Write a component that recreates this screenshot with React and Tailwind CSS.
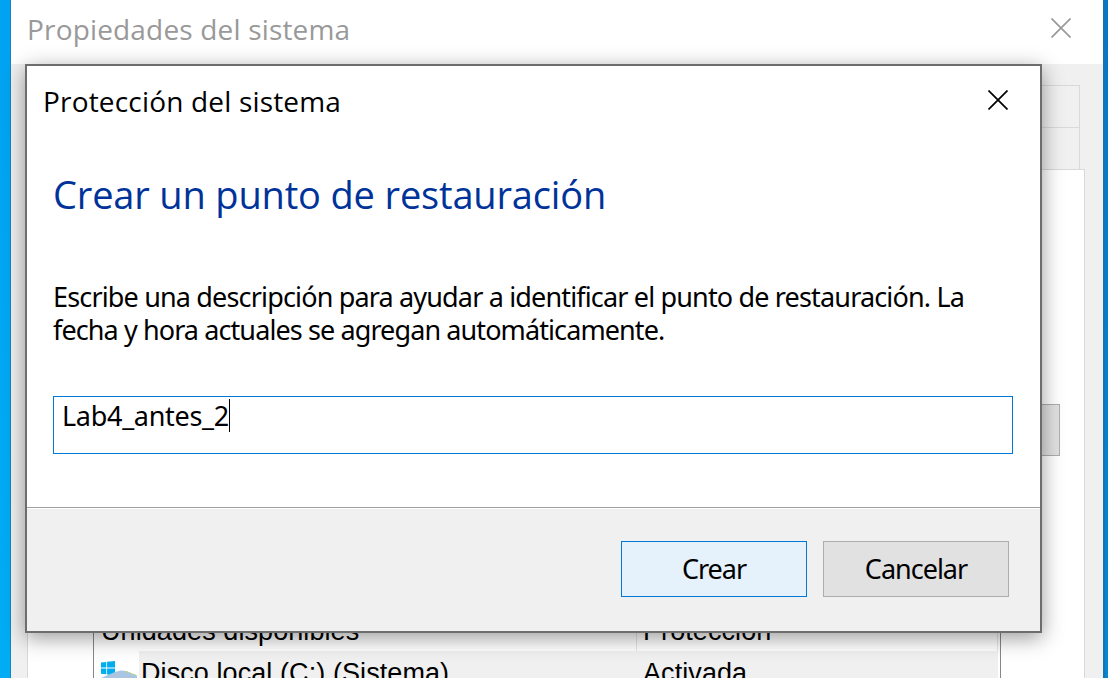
function CloseIcon({ className }) {
  return (
    <svg className={className} width="20" height="20" viewBox="0 0 20 20" fill="none" stroke="currentColor" strokeWidth="1.7">
      <path d="M0.5 0.5 19.5 19.5M19.5 0.5 0.5 19.5" />
    </svg>
  );
}

function DriveIcon() {
  return (
    <svg width="36" height="24" viewBox="0 0 36 24" className="shrink-0">
      <path d="M0 1.6 5.3.9V6.6H0ZM6.1.8 14 0V6.6H6.1ZM0 7.4H5.3V13.3L0 12.7ZM6.1 7.4H14V14.4L6.1 13.5Z" fill="#00adef" />
      <path d="M0 17 14 11 20 9.5 25 10 36 14.5V24H0Z" fill="#a9c5e2" />
      <path d="M25 10.5 36 14.5" stroke="#c5dc3c" strokeWidth="1" strokeDasharray="2 2" />
    </svg>
  );
}

function PropertiesWindow() {
  return (
    <div className="flex h-[678px] w-[1092px] shrink-0 flex-col bg-[#f0f0f0]">
      <header className="flex h-16 shrink-0 items-start justify-between bg-white pl-4 pr-8 font-['Open_Sans','Noto_Sans',sans-serif] text-[#999]">
        <h1 className="mt-[9px] whitespace-nowrap text-[28px] leading-10 tracking-[0.17px]">Propiedades del sistema</h1>
        <CloseIcon className="mt-[18px]" />
      </header>
      <div className="ml-4 mt-[21px] w-[1053px] shrink-0">
        <div className="h-[42px] border-r border-t border-[#d9d9d9]" />
        <div className="h-[42px] border-r border-t border-[#d9d9d9]" />
      </div>
      <div className="ml-4 flex w-[1058px] grow flex-col border-x border-t border-[#d9d9d9] bg-white">
        <div className="ml-auto mr-6 mt-[234px] h-[52px] w-[160px] shrink-0 border border-[#adadad] bg-[#e1e1e1]" />
        <div className="ml-[65px] mt-[150px] h-[72px] w-[908px] shrink-0 overflow-hidden border-x border-[#828790] font-['Liberation_Sans',Arial,sans-serif] text-[27px] tracking-[0.08px] text-black">
          <div className="flex h-[45px] pr-[2px] leading-[50px]">
            <span className="w-[543px] border-r border-[#e5e5e5] pl-[7px]">Unidades disponibles</span>
            <span className="grow border-r border-[#e5e5e5] pl-[6px]">Protección</span>
          </div>
          <div className="flex h-[44px] pl-[7px] pr-[2px] leading-[44px]">
            <div className="w-[38px] pt-[10px]"><DriveIcon /></div>
            <span className="w-[498px] bg-[#f0f0f0] pl-[2px]">Disco local (C:) (Sistema)</span>
            <span className="grow bg-[#f0f0f0] pl-[6px]">Activada</span>
          </div>
        </div>
      </div>
    </div>
  );
}

function RestoreDialog() {
  return (
    <div className="absolute left-[25px] top-16 flex h-[569px] w-[1017px] flex-col border-2 border-[#6d6d6d] bg-white shadow-[0_5px_20px_rgba(0,0,0,0.4)]">
      <div className="flex h-[75px] shrink-0 items-start justify-between pl-4 pr-8 font-['Open_Sans','Noto_Sans',sans-serif] text-black">
        <h2 className="mt-[15px] whitespace-nowrap text-[28px] leading-10 tracking-[0.18px]">Protección del sistema</h2>
        <CloseIcon className="mt-6" />
      </div>
      <div className="flex grow flex-col px-[26px] font-['Noto_Sans',sans-serif] text-[27px] text-black">
        <h3 className="mt-[25px] whitespace-nowrap font-['Open_Sans','Noto_Sans',sans-serif] text-[38px] leading-[56px] tracking-[-0.16px] text-[#003399]">
          Crear un punto de restauración
        </h3>
        <p className="mt-[58px] whitespace-nowrap leading-[33px]">
          <span className="block tracking-[-0.84px]">Escribe una descripción para ayudar a identificar el punto de restauración. La</span>
          <span className="block tracking-[-0.9px]">fecha y hora actuales se agregan automáticamente.</span>
        </p>
        <div className="mt-[50px] flex h-[58px] w-[960px] items-start border border-[#0078d7] pl-2 pt-[2px]">
          <span className="whitespace-nowrap leading-[33px] tracking-[-0.3px]">Lab4_antes_2</span>
          <span className="h-[33px] w-px bg-black" />
        </div>
      </div>
      <footer className="flex h-[124px] shrink-0 justify-end gap-4 border-t border-[#a0a0a0] bg-[#f0f0f0] pr-[31px] pt-[33px] font-['Noto_Sans',sans-serif] text-[27px] tracking-[-1px] text-black shadow-[inset_0_1px_0_#fff]">
        <button className="h-14 w-[186px] border border-[#0078d7] bg-[#e5f1fb]">Crear</button>
        <button className="h-14 w-[186px] border border-[#adadad] bg-[#e1e1e1]">Cancelar</button>
      </footer>
    </div>
  );
}

export default function App() {
  return (
    <div className="relative flex h-[678px] w-[1108px] overflow-hidden">
      <div className="w-[11px] shrink-0 border-r border-[#1684bd] bg-linear-to-b from-[#00a2f2] to-[#00adf5]" />
      <PropertiesWindow />
      <div className="w-[5px] shrink-0 border-l-2 border-[#2270a5] bg-linear-to-b from-[#0078cc] to-[#0088d8]" />
      <RestoreDialog />
    </div>
  );
}
